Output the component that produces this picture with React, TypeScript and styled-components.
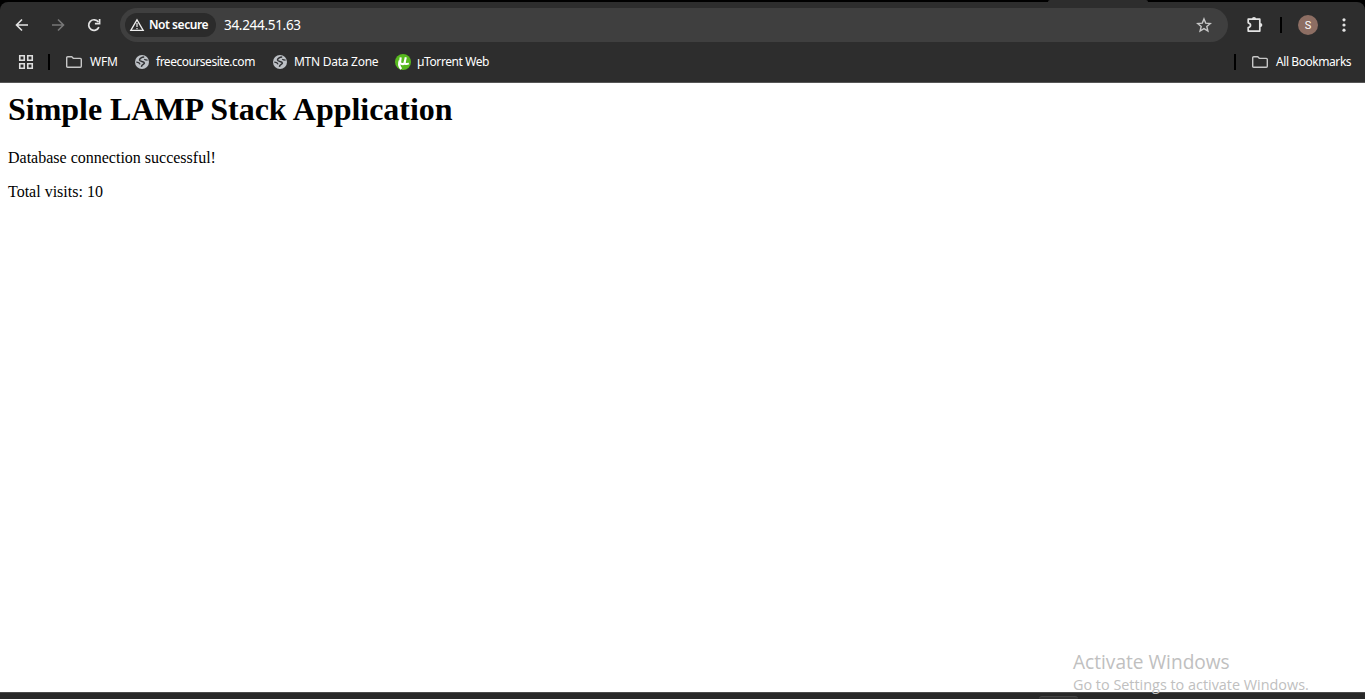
import React from "react";
import styled, { createGlobalStyle } from "styled-components";

const GlobalStyle = createGlobalStyle`
  html, body { margin: 0; padding: 0; background: #fff; overflow: hidden; }
  * { box-sizing: border-box; }
`;

const Window = styled.div`
  display: flex;
  flex-direction: column;
  width: 1365px;
  height: 699px;
  position: relative;
  background: #fff;
  overflow: hidden;
  font-family: "Noto Sans", "Open Sans", sans-serif;
`;

const TabStrip = styled.div`
  height: 2px;
  background: #000;
  display: flex;
  padding-left: 1048px;
`;

const ActiveTabFoot = styled.div`
  width: 100px;
  height: 2px;
  background: #2d2d2d;
  border-radius: 2px 2px 0 0;
`;

const ChromeBack = styled.div`
  background: #000;
`;

const Chrome = styled.header`
  height: 81px;
  background: #2d2d2d;
  border-bottom: 1px solid #565656;
  border-radius: 8px 8px 0 0;
`;

const Toolbar = styled.div`
  height: 46px;
  display: flex;
  align-items: center;
  padding-left: 14px;
`;

const Navigation = styled.div`
  display: flex;
  gap: 20px;
  margin-right: 18px;
`;

const AddressBar = styled.div`
  width: 1108px;
  height: 34px;
  flex: none;
  display: flex;
  align-items: center;
  border-radius: 17px;
  background: #3f3f3f;
  padding: 0 16px 0 5px;
  margin-right: 18px;
`;

const SecurityChip = styled.div`
  width: 91px;
  height: 24px;
  display: flex;
  align-items: center;
  gap: 4px;
  padding-left: 4px;
  border-radius: 12px;
  background: #2b2b2b;
`;

const Label = styled.span<{ $width: number; $spacing?: number; $weight?: number; $size?: number }>`
  flex: none;
  width: ${(p) => p.$width}px;
  font-size: ${(p) => p.$size ?? 12}px;
  font-weight: ${(p) => p.$weight ?? 400};
  letter-spacing: ${(p) => p.$spacing ?? 0}px;
  line-height: 18px;
  white-space: nowrap;
  color: #fff;
`;

const Address = styled(Label)`
  margin-left: 8px;
  margin-right: auto;
`;

const Divider = styled.span<{ $left: number; $right: number }>`
  flex: none;
  width: 2px;
  height: 16px;
  background: #000;
  margin: 0 ${(p) => p.$right}px 0 ${(p) => p.$left}px;
`;

const Avatar = styled.span`
  width: 20px;
  height: 20px;
  flex: none;
  border-radius: 50%;
  background: #8d6e63;
  color: #fff;
  font: 11px/21px Roboto, sans-serif;
  text-align: center;
  margin-right: 24px;
`;

const BookmarksBar = styled.nav`
  height: 28px;
  display: flex;
  align-items: center;
  padding-left: 18px;
`;

const Bookmark = styled.div<{ $gap: number }>`
  display: flex;
  align-items: center;
  gap: ${(p) => p.$gap}px;
`;

const BookmarkList = styled.div`
  display: flex;
  align-items: center;
  gap: 17px;
  margin-right: auto;
`;

const Page = styled.main`
  flex: 1;
  padding: 8px 8px 0;
  color: #000;
  font-family: "Liberation Serif", serif;
  font-size: 16px;

  h1 { margin: 0; font-size: 32px; line-height: 36px; letter-spacing: -0.03px; }
  p { margin: 0 0 16px; line-height: 18px; }
  h1 + p { margin-top: 22px; }
`;

const Taskbar = styled.footer`
  height: 7px;
  background: #282828;
  border-top: 1px solid #4b4b4b;
  padding: 3px 0 0 1039px;
`;

const TaskbarButton = styled.div`
  width: 39px;
  height: 3px;
  background: #333;
  border-top: 1px solid #464646;
  border-radius: 3px 3px 0 0;
`;

const Watermark = styled.aside`
  position: absolute;
  left: 1073px;
  top: 649px;
  color: #c0c0c0;
  font-family: "Open Sans", "Noto Sans", sans-serif;
  white-space: nowrap;
`;

const WatermarkTitle = styled.div`
  font-size: 19.1px;
  line-height: 26px;
`;

const WatermarkText = styled.div`
  font-size: 14.4px;
  line-height: 20px;
`;

const ArrowIcon = ({ color = "#e3e3e3", flip = false }) => (
  <svg width="16" height="16" viewBox="0 0 16 16" fill="none" stroke={color} strokeWidth="1.6">
    <path d={flip ? "M2 8h11M8 2.5 13.5 8 8 13.5" : "M14 8H3M8 2.5 2.5 8 8 13.5"} />
  </svg>
);

const ReloadIcon = () => (
  <svg width="16" height="16" viewBox="0 0 16 16" fill="none" stroke="#e3e3e3" strokeWidth="1.7">
    <path d="M12.9 10.1A5.3 5.3 0 1 1 12.4 5.1" />
    <path d="M13.6 2v4.7H8.9" />
  </svg>
);

const WarningIcon = () => (
  <svg width="16" height="16" viewBox="0 0 16 16">
    <path d="M8 2.8 14.2 13.4H1.8Z" fill="none" stroke="#eee" strokeWidth="1.3" />
    <path d="M8 6v4M8 10.9v1.3" stroke="#ddd" strokeWidth="1.3" />
  </svg>
);

const StarIcon = () => (
  <svg width="16" height="16" viewBox="0 0 16 16" fill="none" stroke="#c7c7c7" strokeWidth="1.4">
    <path d="m8 1.9 1.7 4.2 4.6.4-3.5 3 1.1 4.5L8 11.6 4.1 14l1.1-4.5-3.5-3 4.6-.4Z" />
  </svg>
);

const PuzzleIcon = () => (
  <svg width="18" height="18" viewBox="0 0 18 18">
    <path d="M2.2 3.2h11.6v11.9H2.2v-3.5c3.1-.7 3.1-4.1 0-4.8Z" fill="none" stroke="#e3e3e3" strokeWidth="1.7" strokeLinejoin="round" />
    <path d="M5.9 3a2.1 2.1 0 0 1 4.2 0ZM14 7a2.4 2.1 0 0 1 0 4.2Z" fill="#e3e3e3" />
  </svg>
);

const MenuIcon = () => (
  <svg width="4" height="16" viewBox="0 0 4 16" fill="#e3e3e3">
    <circle cx="2" cy="2.8" r="1.6" />
    <circle cx="2" cy="8" r="1.6" />
    <circle cx="2" cy="13.2" r="1.6" />
  </svg>
);

const AppsIcon = () => (
  <svg width="16" height="16" viewBox="0 0 16 16" fill="none" stroke="#dedede" strokeWidth="1.6">
    <path d="M1.75 1.75h4.5v4.5h-4.5zM9.75 1.75h4.5v4.5h-4.5zM1.75 9.75h4.5v4.5h-4.5zM9.75 9.75h4.5v4.5h-4.5z" />
  </svg>
);

const FolderIcon = () => (
  <svg width="16" height="14" viewBox="0 0 16 14" fill="none" stroke="#c7c7c7" strokeWidth="1.4" strokeLinejoin="round">
    <path d="M1.7 1.7h4.1l1.7 1.7h6.8q1 0 1 1v6.9q0 1-1 1H1.7q-1 0-1-1V2.7q0-1 1-1Z" />
  </svg>
);

const GlobeIcon = () => (
  <svg width="16" height="16" viewBox="0 0 16 16">
    <circle cx="8" cy="8" r="7" fill="#bdc1c6" />
    <path d="M10.2 3.1C7.4 3.2 5.3 4.6 5.5 6.2 5.8 7.9 10.1 7 10.4 9 10.5 10.6 7.7 10.2 7.4 12.8" fill="none" stroke="#303134" strokeWidth="1.5" />
    <path d="M2.3 8.2C4 8.2 5.6 8.9 6 10.4M10.2 5.3C11.3 6.1 12.4 6.2 13.6 6.2" fill="none" stroke="#303134" strokeWidth="1.2" />
  </svg>
);

const TorrentIcon = () => (
  <svg width="16" height="16" viewBox="0 0 16 16">
    <circle cx="8" cy="8" r="8" fill="#57b91f" />
    <path d="M5.7 3.3 5.2 7.5C4.8 10.7 9 10.9 9.7 8.2L10.8 3.3M9.8 7.6C9.4 10.4 11.5 10.5 13.8 9.4" fill="none" stroke="#fff" strokeWidth="2.1" />
    <path d="M4.9 6.5C3.5 9.3 4.1 12.3 6.2 15" fill="none" stroke="#fff" strokeWidth="2.3" />
  </svg>
);

export default function App() {
  return (
    <Window>
      <GlobalStyle />
      <TabStrip><ActiveTabFoot /></TabStrip>
      <ChromeBack>
        <Chrome>
          <Toolbar>
            <Navigation>
              <ArrowIcon />
              <ArrowIcon color="#777" flip />
              <ReloadIcon />
            </Navigation>
            <AddressBar>
              <SecurityChip>
                <WarningIcon />
                <Label $width={60} $weight={600} $spacing={-0.45}>Not secure</Label>
              </SecurityChip>
              <Address $width={90} $size={13.5} $spacing={-0.3}>34.244.51.63</Address>
              <StarIcon />
            </AddressBar>
            <PuzzleIcon />
            <Divider $left={16} $right={16} />
            <Avatar>S</Avatar>
            <MenuIcon />
          </Toolbar>
          <BookmarksBar>
            <AppsIcon />
            <Divider $left={14} $right={16} />
            <BookmarkList>
              <Bookmark $gap={8}><FolderIcon /><Label $width={27} $spacing={-0.2}>WFM</Label></Bookmark>
              <Bookmark $gap={6}><GlobeIcon /><Label $width={99} $spacing={-0.49}>freecoursesite.com</Label></Bookmark>
              <Bookmark $gap={6}><GlobeIcon /><Label $width={84} $spacing={-0.27}>MTN Data Zone</Label></Bookmark>
              <Bookmark $gap={6}><TorrentIcon /><Label $width={75} $spacing={-0.41}>µTorrent Web</Label></Bookmark>
            </BookmarkList>
            <Divider $left={0} $right={16} />
            <Bookmark $gap={8}><FolderIcon /><Label $width={89} $spacing={-0.43}>All Bookmarks</Label></Bookmark>
          </BookmarksBar>
        </Chrome>
      </ChromeBack>
      <Page>
        <h1>Simple LAMP Stack Application</h1>
        <p>Database connection successful!</p>
        <p>Total visits: 10</p>
      </Page>
      <Taskbar><TaskbarButton /></Taskbar>
      <Watermark>
        <WatermarkTitle>Activate Windows</WatermarkTitle>
        <WatermarkText>Go to Settings to activate Windows.</WatermarkText>
      </Watermark>
    </Window>
  );
}
